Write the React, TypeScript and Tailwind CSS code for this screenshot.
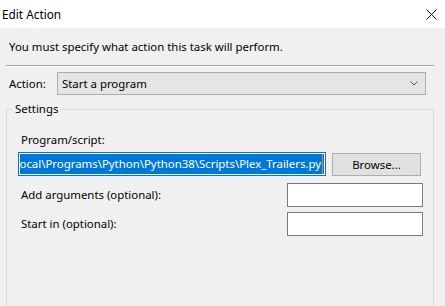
import React from "react"

const font = { fontFamily: '"Segoe UI", "Noto Sans", "Liberation Sans", sans-serif' }

function CloseIcon() {
  return (
    <svg width="11" height="11" viewBox="0 0 11 11" className="block">
      <path d="M0.5 0.5 L10.5 10.5 M10.5 0.5 L0.5 10.5" stroke="#111" strokeWidth="1" fill="none" />
    </svg>
  )
}

function Chevron() {
  return (
    <svg width="8" height="5" viewBox="0 0 8 5" className="block">
      <path d="M0.5 0.5 L4 4 L7.5 0.5" stroke="#555" strokeWidth="1" fill="none" />
    </svg>
  )
}

export default function App() {
  const path = "C:\\Users\\User\\AppData\\Local\\Programs\\Python\\Python38\\Scripts\\Plex_Trailers.py"

  return (
    <div className="w-[445px] h-[306px] overflow-hidden bg-[#f0f0f0] text-[11.4px] leading-[16px] text-black" style={font}>
      {/* title bar */}
      <div className="flex h-[28px] items-center justify-between bg-white pl-[2px] pr-[8px]">
        <span className="text-[11.8px]">Edit Action</span>
        <CloseIcon />
      </div>

      <p className="mt-[11px] pl-[9px]">You must specify what action this task will perform.</p>

      <div className="mx-[6px] mt-[10px] w-[428px] border-t border-b border-t-[#a0a0a0] border-b-white" />

      <div className="mt-[5px] flex items-center">
        <span className="w-[48px] pl-[9px] box-content">Action:</span>
        <div className="flex h-[23px] w-[369px] items-center justify-between border border-[#adadad] bg-[#e5e5e5] pl-[4px] pr-[7px]">
          <span>Start a program</span>
          <Chevron />
        </div>
      </div>

      <fieldset className="ml-[6px] mt-[6px] h-[240px] w-[428px] border border-[#dcdcdc]">
        <legend className="ml-[6px] px-[2px]">Settings</legend>

        <div className="pl-[11px]">
          <div className="mt-[15px] pl-[3px]">Program/script:</div>

          <div className="mt-[4px] flex items-start">
            <div className="flex h-[24px] w-[308px] border border-[#0078d7] bg-white p-[1px]">
              <div className="flex flex-1 justify-end overflow-hidden whitespace-nowrap bg-[#0078d7] leading-[20px] text-white">
                <span>{path}</span>
                <span className="ml-[1px] mr-[1px] w-[1px] shrink-0 bg-[#f07a3a]" />
              </div>
            </div>
            <button className="ml-[6px] mt-[1px] h-[23px] w-[89px] border border-[#adadad] bg-[#e1e1e1]">
              Browse...
            </button>
          </div>

          <div className="mt-[7px] flex items-center justify-between pr-[10px]">
            <span className="pl-[3px]">Add arguments (optional):</span>
            <div className="h-[24px] w-[136px] border border-[#7a7a7a] bg-white" />
          </div>

          <div className="mt-[5px] flex items-center justify-between pr-[10px]">
            <span className="pl-[3px]">Start in (optional):</span>
            <div className="h-[24px] w-[136px] border border-[#7a7a7a] bg-white" />
          </div>
        </div>
      </fieldset>
    </div>
  )
}
